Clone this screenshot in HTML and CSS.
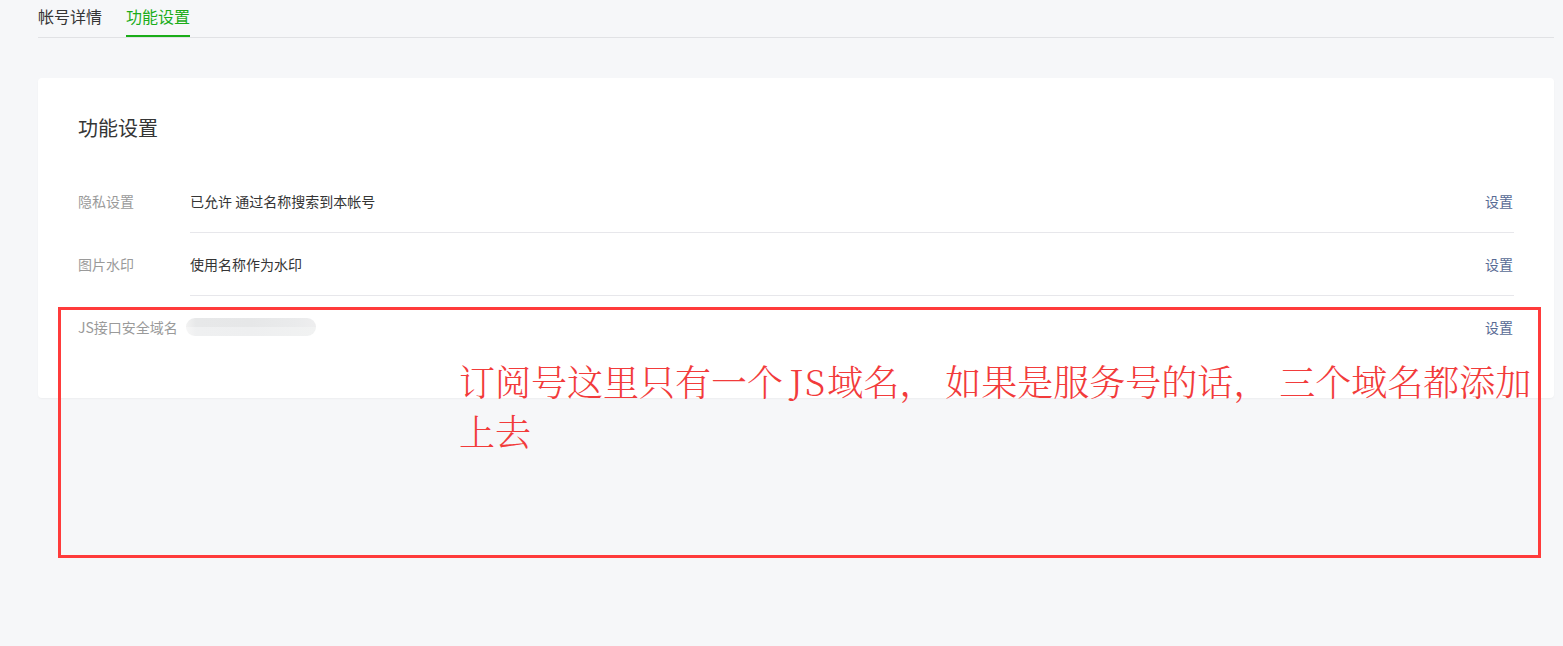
FILE: index.html
```html
<!DOCTYPE html>
<html lang="zh-CN">
<head>
    <meta charset="UTF-8">
    <title>功能设置</title>
    <link rel="stylesheet" href="styles.css">
</head>
<body>

    <div class="page">
        <div class="tabs">
            <a class="tab">帐号详情</a>
            <a class="tab tab-active">功能设置</a>
        </div>

        <div class="card">
            <h2 class="card-title">功能设置</h2>

            <div class="row">
                <div class="row-label">隐私设置</div>
                <div class="row-body">
                    <span class="row-value">已允许 通过名称搜索到本帐号</span>
                    <a class="row-action">设置</a>
                </div>
            </div>

            <div class="row">
                <div class="row-label">图片水印</div>
                <div class="row-body">
                    <span class="row-value">使用名称作为水印</span>
                    <a class="row-action">设置</a>
                </div>
            </div>

            <div class="row row-last">
                <div class="row-label">JS接口安全域名</div>
                <div class="row-body">
                    <span class="blurred"></span>
                    <a class="row-action">设置</a>
                </div>
            </div>
        </div>
    </div>

    <!-- 标注 -->
    <div class="mark-box"></div>
    <div class="mark-text">订阅号这里只有一个<span class="latin">JS</span>域名<span class="punct">，</span>如果是服务号的话<span class="punct">，</span>三个域名都添加上去</div>

</body>
</html>
```

FILE: styles.css
```css
html, body {
    margin: 0;
    background-color: #f6f7f9;
}
body {
    font-family: "Noto Sans CJK SC", "Noto Sans", sans-serif;
    color: #353535;
    position: relative;
    min-height: 646px;
}
.page {
    padding: 0 9px 0 38px;
}
.tabs {
    display: flex;
    gap: 24px;
    border-bottom: 1px solid #e1e2e5;
    height: 37px;
}
.tab {
    font-size: 16px;
    line-height: 33px;
    color: #353535;
    border-bottom: 2px solid transparent;
    height: 35px;
    margin-bottom: -1px;
}
.tab-active {
    color: #1aad19;
    border-bottom-color: #1aad19;
}
.card {
    margin-top: 40px;
    background-color: #fff;
    border-radius: 4px;
    box-shadow: 0 1px 2px rgba(0,0,0,0.04);
    padding: 36px 40px 40px 40px;
}
.card-title {
    margin: 0 0 28px 0;
    font-size: 20px;
    font-weight: normal;
    line-height: 28px;
    color: #353535;
}
.row {
    display: flex;
    font-size: 14px;
    line-height: 22px;
}
.row-label {
    width: 112px;
    flex-shrink: 0;
    color: #9a9a9a;
    padding: 20px 0;
}
.row-body {
    flex: 1;
    display: flex;
    align-items: center;
    justify-content: space-between;
    padding: 20px 0;
    border-bottom: 1px solid #e7e7eb;
}
.row-last .row-body {
    border-bottom: none;
}
.row-value {
    color: #353535;
}
.row-action {
    color: #576b95;
    cursor: pointer;
    margin-right: 1px;
}
.blurred {
    display: block;
    width: 130px;
    height: 18px;
    margin-left: -4px;
    border-radius: 9px;
    background:
        linear-gradient(to right, #f2f2f2 0, #e7e8e9 10px, #e6e7e8 50%, #eaebec 85%, #eeeeef 100%) top / 100% 50% no-repeat,
        linear-gradient(to right, #f6f6f6 0, #eff0f1 10px, #eeeff0 50%, #f1f2f2 100%) bottom / 100% 50% no-repeat;
}
.mark-box {
    position: absolute;
    left: 58px;
    top: 307px;
    width: 1477px;
    height: 245px;
    border: 3px solid #ff3b3b;
}
.mark-text {
    position: absolute;
    left: 459px;
    top: 356px;
    width: 1085px;
    font-family: "Noto Serif CJK SC", "Liberation Serif", "Noto Sans CJK SC", serif;
    font-size: 36px;
    line-height: 50px;
    color: #f23b3b;
    font-weight: 300;
}
.latin {
    padding-left: 6px;
    letter-spacing: 2px;
}
.punct {
    margin-right: 10px;
}
```
